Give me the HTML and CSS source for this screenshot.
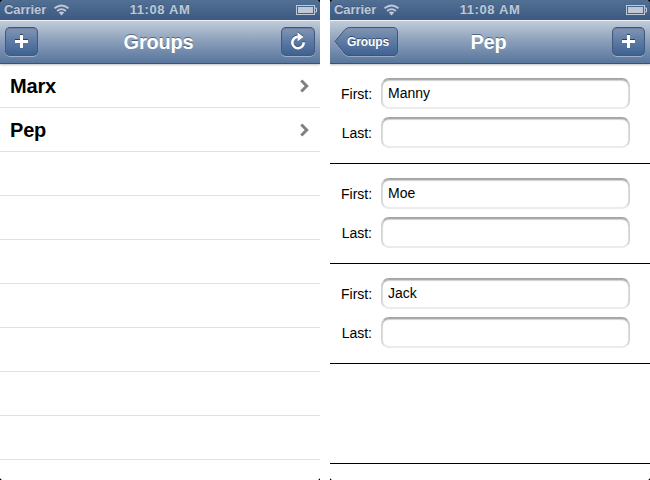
FILE: index.html
```
<!DOCTYPE html>
<html lang="en">
<head>
<meta charset="utf-8">
<title>Groups</title>
<link rel="stylesheet" href="styles.css">
</head>
<body>
<svg class="defs" width="0" height="0" aria-hidden="true">
  <symbol id="wifi" viewBox="0 0 16 12">
    <g fill="none" stroke="currentColor" stroke-width="1.8">
      <path d="M1 4.3Q8-1.4 15 4.3"/>
      <path d="M3.6 7Q8 3.2 12.4 7"/>
    </g>
    <path d="M5.3 8.6Q8 6.4 10.7 8.6L8 11.4Z" fill="currentColor"/>
  </symbol>
  <symbol id="battery" viewBox="0 0 22 11">
    <rect x=".5" y=".5" width="18" height="9" fill="none" stroke="currentColor"/>
    <rect x="2" y="2" width="15" height="6" fill="currentColor"/>
    <path d="M19 3h1.500v4H19" fill="none" stroke="currentColor"/>
  </symbol>
  <symbol id="plus" viewBox="0 0 13 14">
    <path d="M5 0h3v1H5zM0 5h5v1H0zM8 5h5v1H8z" fill="#2c3e5a"/>
    <path d="M5 1h3v5h5v3H8v5H5V9H0V6h5z" fill="#fff"/>
  </symbol>
  <symbol id="chevron" viewBox="0 0 9 14">
    <path d="M1.300 1.500L6.700 7L1.300 12.500" fill="none" stroke="#808080" stroke-width="3"/>
  </symbol>
</svg>
<div class="screens">
  <section class="phone">
    <header class="status">
      <span class="carrier">Carrier</span><svg class="wifi"><use href="#wifi"/></svg>
      <span class="time">11:08 AM</span>
      <svg class="battery"><use href="#battery"/></svg>
    </header>
    <nav class="bar">
      <button class="button" aria-label="Add"><svg class="plus"><use href="#plus"/></svg></button>
      <h1 class="title">Groups</h1>
      <button class="button button-reload" aria-label="Reload">
        <svg class="reload" viewBox="0 0 16 18"><path d="M7.800 4.800A5.700 5.700 0 1 0 13.700 10.300" fill="none" stroke="#fff" stroke-width="2.600"/><path d="M7.600 .3L13.400 5L7.600 9.300Z" fill="#fff"/></svg>
      </button>
    </nav>
    <ul class="groups">
      <li class="group">Marx<svg class="chevron"><use href="#chevron"/></svg></li>
      <li class="group">Pep<svg class="chevron"><use href="#chevron"/></svg></li>
      <li class="group"></li>
      <li class="group"></li>
      <li class="group"></li>
      <li class="group"></li>
      <li class="group"></li>
      <li class="group"></li>
      <li class="group"></li>
    </ul>
  </section>
  <section class="phone">
    <header class="status">
      <span class="carrier">Carrier</span><svg class="wifi"><use href="#wifi"/></svg>
      <span class="time">11:08 AM</span>
      <svg class="battery"><use href="#battery"/></svg>
    </header>
    <nav class="bar">
      <button class="back">
        <svg class="back-shape" viewBox="0 0 64 31">
          <defs><linearGradient id="fill" x2="0" y2="1"><stop offset="0" stop-color="#8296b4"/><stop offset=".5" stop-color="#5c7aa5"/><stop offset="1" stop-color="#3f6291"/></linearGradient>
          <linearGradient id="edge" x2="0" y2="1"><stop offset="0" stop-color="#46556d"/><stop offset="1" stop-color="#3a557d"/></linearGradient></defs>
          <path d="M1 15.500L11 3Q13 1.500 16 1.500H59Q63.500 1.500 63.500 6V25Q63.500 29.500 59 29.500H16Q13 29.500 11 28Z" fill="none" stroke="#b0bfd3" stroke-opacity=".65"/>
          <path d="M1 14.500L11 2.500Q13 .5 16 .5H59Q63.500 .5 63.500 5V24Q63.500 28.500 59 28.500H16Q13 28.500 11 27Z" fill="url(#fill)" stroke="url(#edge)"/>
        </svg>
        <span class="back-label">Groups</span>
      </button>
      <h1 class="title">Pep</h1>
      <button class="button" aria-label="Add"><svg class="plus"><use href="#plus"/></svg></button>
    </nav>
    <form class="people">
      <div class="person">
        <label class="label">First:</label><div class="field">Manny</div>
        <label class="label">Last:</label><div class="field"></div>
      </div>
      <div class="person">
        <label class="label">First:</label><div class="field">Moe</div>
        <label class="label">Last:</label><div class="field"></div>
      </div>
      <div class="person">
        <label class="label">First:</label><div class="field">Jack</div>
        <label class="label">Last:</label><div class="field"></div>
      </div>
      <div class="person"></div>
    </form>
  </section>
</div>
</body>
</html>
```
FILE: styles.css
```
* { box-sizing: border-box; }
body {
  margin: 0;
  background: #fff;
  font-family: "Liberation Sans", Arial, sans-serif;
  color: #000;
}
.defs { position: absolute; }
svg { display: block; }
.screens { display: flex; gap: 10px; height: 480px; }
.phone {
  position: relative;
  width: 320px;
  height: 480px;
  overflow: hidden;
}
.phone::after {
  content: "";
  position: absolute;
  inset: 0;
  pointer-events: none;
  background:
    linear-gradient(135deg, #000 1.2px, transparent 2px) 0 0 / 3px 3px no-repeat,
    linear-gradient(225deg, #000 1.2px, transparent 2px) 100% 0 / 3px 3px no-repeat,
    linear-gradient(45deg, #000 1px, transparent 1.6px) 0 100% / 3px 3px no-repeat,
    linear-gradient(315deg, #000 1px, transparent 1.6px) 100% 100% / 3px 3px no-repeat;
}
.status {
  display: grid;
  grid-template-columns: 49px 26px 162px 1fr 21px;
  align-items: center;
  height: 20px;
  padding: 0 3px 0 4px;
  background: linear-gradient(#526f94, #3c5a82);
  color: #bec8d7;
  font-size: 13px;
  font-weight: bold;
  line-height: 20px;
  text-shadow: 0 -1px rgba(35, 55, 85, .35);
}
.carrier { letter-spacing: -.05px; }
.wifi { width: 17px; height: 12px; }
.time { text-align: center; letter-spacing: .6px; }
.battery { grid-column: 5; width: 22px; height: 11px; }
.bar {
  position: relative;
  z-index: 1;
  display: grid;
  grid-template-columns: 70px 1fr 70px;
  align-items: start;
  height: 44px;
  padding: 7px 5px 0;
  border-top: 1px solid #eef1f5;
  border-bottom: 1px solid #355380;
  background: linear-gradient(#c0ccda, #889db9 50%, #58759c);
  box-shadow: 0 1px 2px rgba(0, 0, 0, .25);
}
.bar > :last-child { justify-self: end; }
.button {
  display: grid;
  place-content: center;
  width: 33px;
  height: 29px;
  margin: -1px 0 0;
  padding: 0 0 1px;
  border: 1px solid #435a7c;
  border-top-color: #46556d;
  border-radius: 5px;
  background: linear-gradient(#8296b4, #5c7aa5 50%, #3f6291);
  box-shadow: 0 1px rgba(190, 203, 220, .65), inset 0 1px 1px rgba(50, 65, 90, .25);
}
.button-reload { width: 34px; }
.plus { width: 13px; height: 14px; }
.reload {
  width: 16px;
  height: 18px;
  filter: drop-shadow(0 -1px rgba(35, 50, 75, .6));
}
.title {
  margin: 1px 3px 0 0;
  color: #fff;
  font-size: 20px;
  letter-spacing: -.2px;
  line-height: 26px;
  text-align: center;
  text-shadow: 0 -1px rgba(40, 55, 80, .6);
}
.back {
  display: grid;
  width: 64px;
  height: 31px;
  margin: -1px 0 0 -1px;
  padding: 0;
  border: 0;
  background: none;
  color: #fff;
  font: bold 12px/30px "Liberation Sans", Arial, sans-serif;
  letter-spacing: -.1px;
  text-shadow: 0 -1px rgba(35, 50, 75, .75);
}
.back-shape, .back-label { grid-area: 1 / 1; }
.back-shape { width: 64px; height: 31px; }
.back-label { padding-left: 4px; }
.groups { margin: 0; padding: 0; list-style: none; }
.group {
  display: flex;
  align-items: center;
  justify-content: space-between;
  height: 44px;
  padding: 1px 11px 0 10px;
  border-bottom: 1px solid #e0e0e0;
  font-size: 20px;
  font-weight: bold;
  letter-spacing: -.2px;
}
.chevron { width: 9px; height: 14px; }
.person {
  display: grid;
  grid-template-columns: 31px 249px;
  grid-auto-rows: 31px;
  gap: 8px 9px;
  height: 100px;
  padding: 14px 0 0 11px;
  border-bottom: 1px solid #000;
}
.label {
  font-size: 14px;
  line-height: 33px;
  text-align: right;
  white-space: nowrap;
}
.field {
  padding: 0 6px;
  border: 1px solid #d2d2d2;
  border-top-color: #a3a3a3;
  border-bottom-color: #ebebeb;
  border-radius: 8px;
  box-shadow: inset 0 1px #ababab, inset 0 2px 1px #d0d0d0, inset 1px 0 1px #ddd, inset -1px 0 1px #ddd, inset 0 -1px #f0f0f0;
  font-size: 14px;
  line-height: 29px;
}
```
